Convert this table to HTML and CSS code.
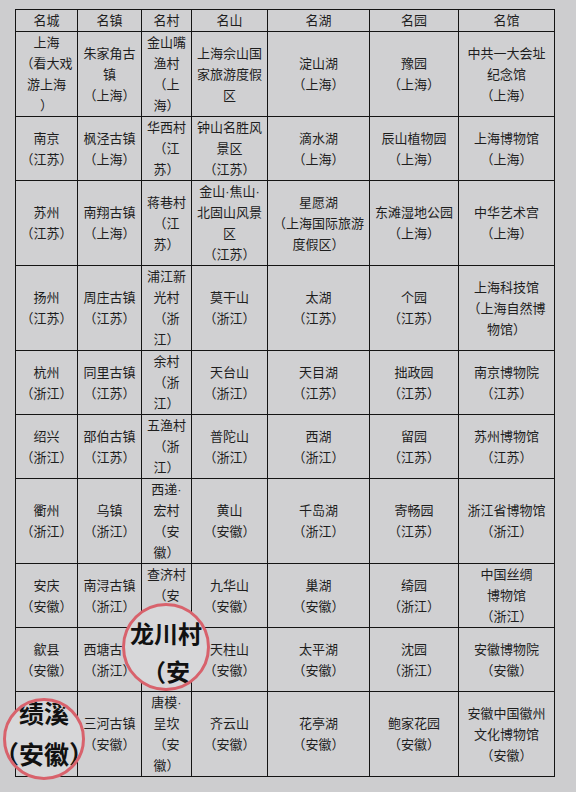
FILE: index.html
```html
<!DOCTYPE html>
<html lang="zh-CN">
<head>
<meta charset="utf-8">
<title>名城名镇名村名山名湖名园名馆</title>
<link rel="stylesheet" href="styles.css">
</head>
<body>
<div class="sheet">
  <table class="grid">
    <colgroup>
      <col class="c1"><col class="c2"><col class="c3"><col class="c4"><col class="c5"><col class="c6"><col class="c7">
    </colgroup>
    <thead>
      <tr class="head"><th>名城</th><th>名镇</th><th>名村</th><th>名山</th><th>名湖</th><th>名园</th><th>名馆</th></tr>
    </thead>
    <tbody>
      <tr class="tall">
        <td>上海<br>（看大戏<br>游上海<br>）</td>
        <td>朱家角古<br>镇<br>（上海）</td>
        <td>金山嘴<br>渔村<br>（上<br>海）</td>
        <td>上海佘山国<br>家旅游度假<br>区</td>
        <td>淀山湖<br>（上海）</td>
        <td>豫园<br>（上海）</td>
        <td>中共一大会址<br>纪念馆<br>（上海）</td>
      </tr>
      <tr class="short">
        <td>南京<br>（江苏）</td>
        <td>枫泾古镇<br>（上海）</td>
        <td>华西村<br>（江<br>苏）</td>
        <td>钟山名胜风<br>景区<br>（江苏）</td>
        <td>滴水湖<br>（上海）</td>
        <td>辰山植物园<br>（上海）</td>
        <td>上海博物馆<br>（上海）</td>
      </tr>
      <tr class="tall">
        <td>苏州<br>（江苏）</td>
        <td>南翔古镇<br>（上海）</td>
        <td>蒋巷村<br>（江<br>苏）</td>
        <td>金山·焦山·<br>北固山风景<br>区<br>（江苏）</td>
        <td>星愿湖<br>（上海国际旅游<br>度假区）</td>
        <td>东滩湿地公园<br>（上海）</td>
        <td>中华艺术宫<br>（上海）</td>
      </tr>
      <tr class="tall">
        <td>扬州<br>（江苏）</td>
        <td>周庄古镇<br>（江苏）</td>
        <td>浦江新<br>光村<br>（浙<br>江）</td>
        <td>莫干山<br>（浙江）</td>
        <td>太湖<br>（江苏）</td>
        <td>个园<br>（江苏）</td>
        <td>上海科技馆<br>（上海自然博<br>物馆）</td>
      </tr>
      <tr class="short">
        <td>杭州<br>（浙江）</td>
        <td>同里古镇<br>（江苏）</td>
        <td>余村<br>（浙<br>江）</td>
        <td>天台山<br>（浙江）</td>
        <td>天目湖<br>（江苏）</td>
        <td>拙政园<br>（江苏）</td>
        <td>南京博物院<br>（江苏）</td>
      </tr>
      <tr class="short">
        <td>绍兴<br>（浙江）</td>
        <td>邵伯古镇<br>（江苏）</td>
        <td>五渔村<br>（浙<br>江）</td>
        <td>普陀山<br>（浙江）</td>
        <td>西湖<br>（浙江）</td>
        <td>留园<br>（江苏）</td>
        <td>苏州博物馆<br>（江苏）</td>
      </tr>
      <tr class="tall">
        <td>衢州<br>（浙江）</td>
        <td>乌镇<br>（浙江）</td>
        <td>西递·<br>宏村<br>（安<br>徽）</td>
        <td>黄山<br>（安徽）</td>
        <td>千岛湖<br>（浙江）</td>
        <td>寄畅园<br>（江苏）</td>
        <td>浙江省博物馆<br>（浙江）</td>
      </tr>
      <tr class="short">
        <td>安庆<br>（安徽）</td>
        <td>南浔古镇<br>（浙江）</td>
        <td>查济村<br>（安<br>徽）</td>
        <td>九华山<br>（安徽）</td>
        <td>巢湖<br>（安徽）</td>
        <td>绮园<br>（浙江）</td>
        <td>中国丝绸<br>博物馆<br>（浙江）</td>
      </tr>
      <tr class="short">
        <td>歙县<br>（安徽）</td>
        <td>西塘古镇<br>（浙江）</td>
        <td>龙川村<br>（安<br>徽）</td>
        <td>天柱山<br>（安徽）</td>
        <td>太平湖<br>（安徽）</td>
        <td>沈园<br>（浙江）</td>
        <td>安徽博物院<br>（安徽）</td>
      </tr>
      <tr class="tall">
        <td>绩溪<br>（安徽）</td>
        <td>三河古镇<br>（安徽）</td>
        <td>唐模·<br>呈坎<br>（安<br>徽）</td>
        <td>齐云山<br>（安徽）</td>
        <td>花亭湖<br>（安徽）</td>
        <td>鲍家花园<br>（安徽）</td>
        <td>安徽中国徽州<br>文化博物馆<br>（安徽）</td>
      </tr>
    </tbody>
  </table>

  <div class="lens lens-longchuan">
    <div class="lens-text">龙川村<br>（安</div>
  </div>
  <div class="lens lens-jixi">
    <div class="lens-text">绩溪<br>（安徽）</div>
  </div>
</div>
</body>
</html>
```

FILE: styles.css
```css
html, body {
  margin: 0;
  padding: 0;
  background: #cdcdcf;
}

body {
  width: 576px;
  height: 792px;
  overflow: hidden;
  font-family: "Liberation Sans", "Noto Sans CJK SC", sans-serif;
  color: #1e1e1e;
  text-spacing-trim: space-all;
}

.sheet {
  position: relative;
  width: 576px;
  height: 792px;
  padding: 9px 0 0 15px;
  box-sizing: border-box;
}

.grid {
  border-collapse: collapse;
  table-layout: fixed;
  width: 540px;
  background: #d0d0d2;
}

.c1 { width: 62px; }
.c2 { width: 64px; }
.c3 { width: 50px; }
.c4 { width: 76px; }
.c5 { width: 102px; }
.c6 { width: 89px; }
.c7 { width: 96px; }

.grid th,
.grid td {
  border: 1px solid #141414;
  padding: 0;
  text-align: center;
  vertical-align: middle;
  font-size: 13px;
  line-height: 21px;
  font-weight: normal;
  white-space: nowrap;
  overflow: hidden;
  text-spacing-trim: space-all;
}

.head th { height: 21px; }
.tall td { height: 84px; }
.short td { height: 63px; }

.lens {
  position: absolute;
  border: 3px solid #d8626c;
  border-radius: 50%;
  background: #d7d7d9;
  overflow: hidden;
  text-align: center;
  color: #111;
  font-weight: bold;
  text-spacing-trim: space-all;
}

.lens-longchuan {
  left: 122px;
  top: 603px;
  width: 82px;
  height: 82px;
}

.lens-longchuan .lens-text {
  font-size: 24px;
  line-height: 38px;
  margin-top: 10px;
  white-space: nowrap;
}

.lens-jixi {
  left: 3px;
  top: 698px;
  width: 76px;
  height: 76px;
}

.lens-jixi .lens-text {
  font-size: 25px;
  line-height: 41px;
  margin-top: -7px;
  margin-left: -30px;
  margin-right: -30px;
  white-space: nowrap;
}
```
